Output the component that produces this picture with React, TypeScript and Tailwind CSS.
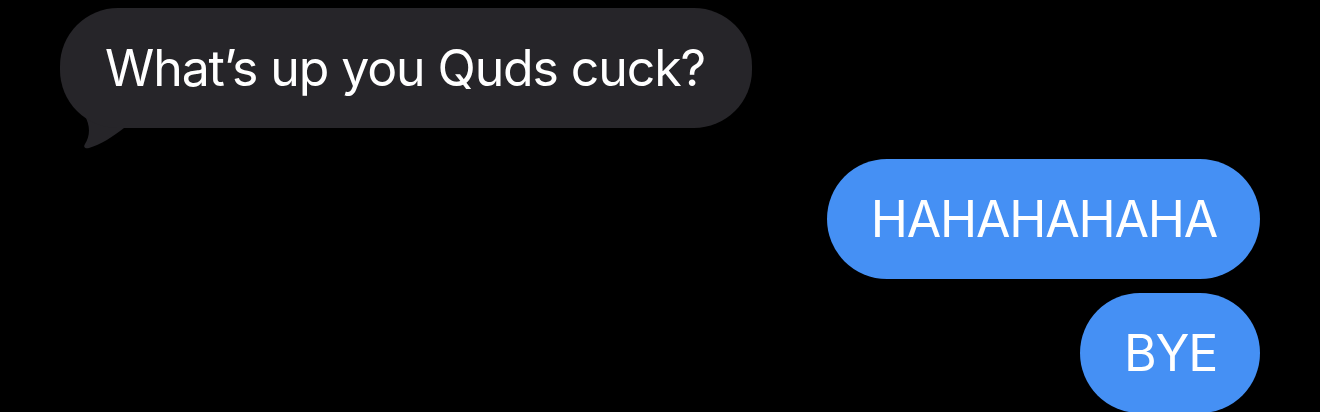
import React from 'react';

const font = { fontFamily: 'Inter, "Noto Sans", sans-serif' };

const IncomingBubble = ({ text }: { text: string }) => (
  <div className="relative inline-flex">
    {/* tail */}
    <svg className="absolute left-0 top-[60px]" width="80" height="90" viewBox="0 60 80 90">
      <path
        d="M12 70 L64 70 L64 120 C54 128 40 137 29 140 C25 141 23 139 25 136 C30 128 31 118 24 106 C18 96 14 86 12 70 Z"
        fill="#262529"
      />
    </svg>
    <div className="relative h-[120px] rounded-[58px] bg-[#262529] pl-[45px] pr-[47px] flex items-center text-[50px] tracking-[-1.1px] text-white">
      {text}
    </div>
  </div>
);

const OutgoingBubble = ({ text }: { text: string }) => (
  <div className="h-[120px] rounded-[60px] bg-[#4590f4] pl-[44px] pr-[43px] flex items-center text-[50px] tracking-[-1.2px] text-white">
    {text}
  </div>
);

export default function App() {
  return (
    <div className="h-[412px] w-[1320px] overflow-hidden bg-black" style={font}>
      <div className="pl-[60px] pt-[8px]">
        <IncomingBubble text="What’s up you Quds cuck?" />
      </div>
      <div className="flex flex-col items-end gap-[14px] pr-[60px] mt-[31px]">
        <OutgoingBubble text="HAHAHAHAHA" />
        <OutgoingBubble text="BYE" />
      </div>
    </div>
  );
}
